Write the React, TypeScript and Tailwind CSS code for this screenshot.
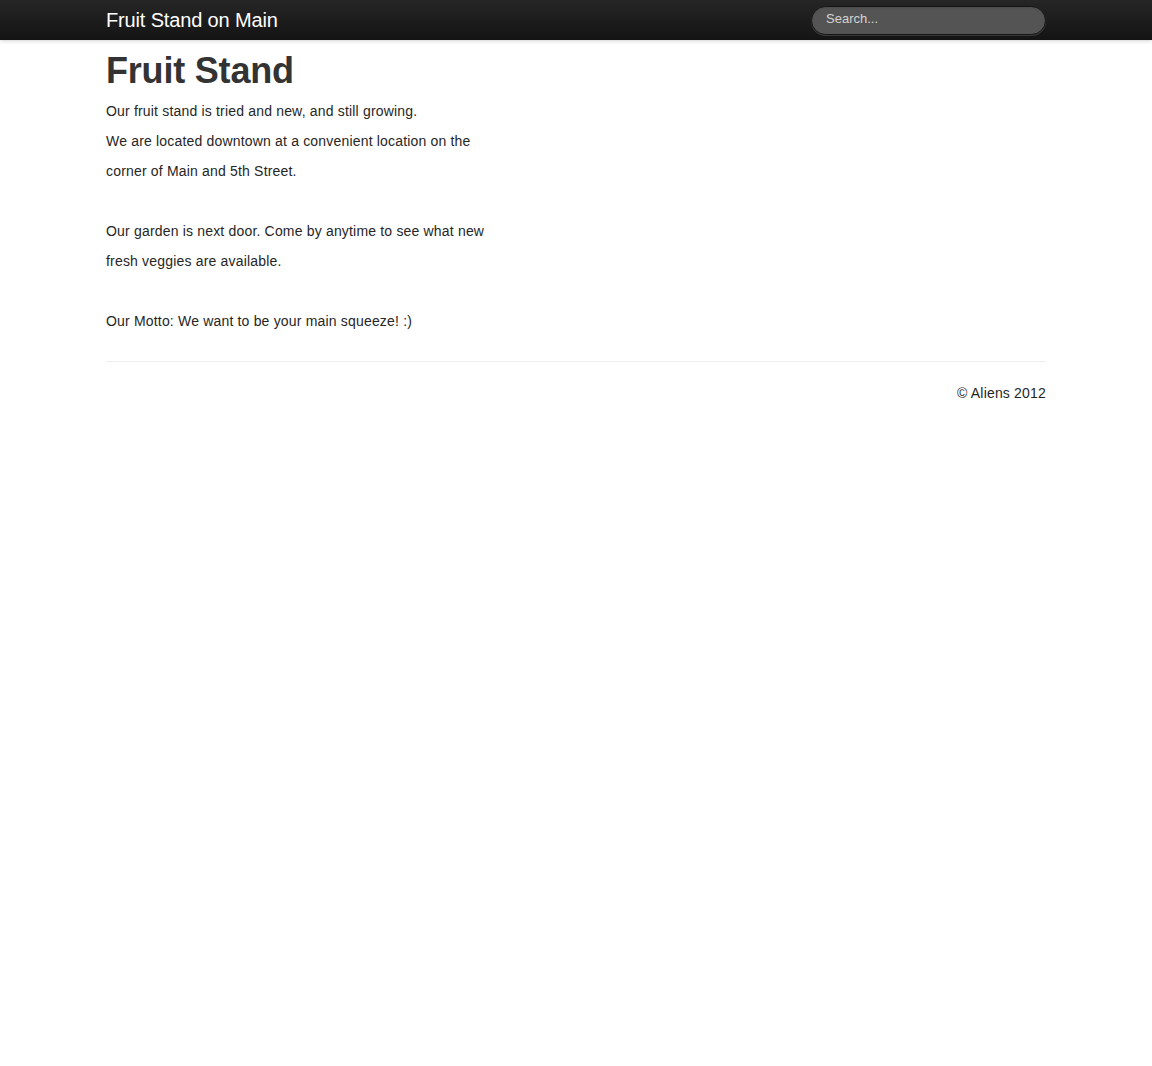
const lines: (string | null)[] = [
  'Our fruit stand is tried and new, and still growing.',
  'We are located downtown at a convenient location on the',
  'corner of Main and 5th Street.',
  null,
  'Our garden is next door. Come by anytime to see what new',
  'fresh veggies are available.',
  null,
  'Our Motto: We want to be your main squeeze! :)',
];

const Navbar = () => (
  <div className="relative h-[40px] bg-gradient-to-b from-[#262626] to-[#141414] shadow-[0_1px_4px_rgba(0,0,0,0.18)]">
    <div className="mx-auto flex h-full w-[940px] items-center justify-between">
      <a className="text-[20px] leading-[40px] tracking-[-0.15px] text-white">Fruit Stand on Main</a>
      <input
        type="text"
        placeholder="Search..."
        className="h-[29px] w-[235px] rounded-full border border-[#151515] bg-[#545454] px-[14px] pb-[4px] text-[13px] text-white shadow-[inset_0_1px_2px_rgba(0,0,0,0.1),0_1px_0_rgba(255,255,255,0.15)] outline-none placeholder:text-[#d4d4d4]"
      />
    </div>
  </div>
);

export default function App() {
  return (
    <div className="min-h-[1066px] bg-white font-['Liberation_Sans',Arial,sans-serif] text-[#262626]">
      <Navbar />
      <div className="mx-auto w-[940px]">
        <h1 className="mt-[13px] mb-[7px] text-[36px] font-bold leading-[36px] tracking-[-0.2px] text-[#333]">
          Fruit Stand
        </h1>
        <div className="text-[14px] leading-[30px] tracking-[0.18px]">
          {lines.map((line, i) =>
            line ? <p key={i}>{line}</p> : <p key={i} className="h-[30px]" />,
          )}
        </div>
        <hr className="mt-[25px] border-t border-[#eee]" />
        {/* footer */}
        <p className="mt-[22px] text-right text-[14px] leading-[18px] tracking-[0.18px]">© Aliens 2012</p>
      </div>
    </div>
  );
}
